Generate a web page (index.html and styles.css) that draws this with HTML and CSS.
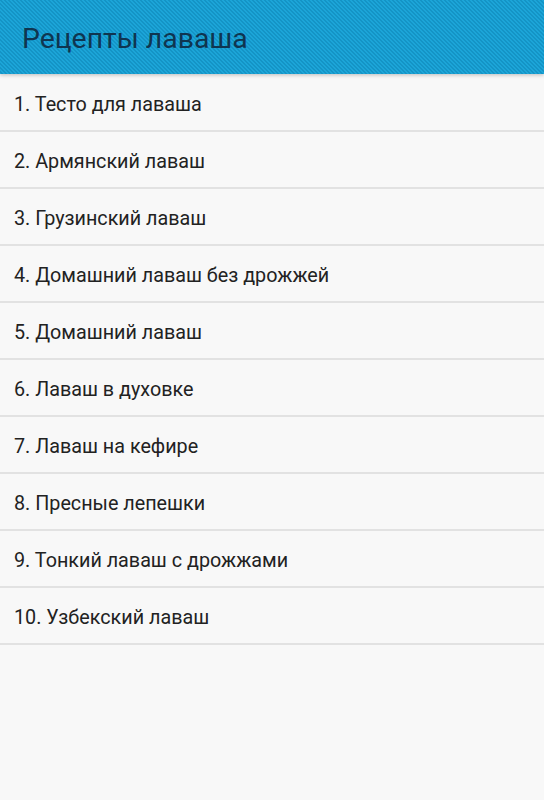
FILE: index.html
```html
<!DOCTYPE html>
<html lang="ru">
<head>
<meta charset="utf-8">
<title>Рецепты лаваша</title>
<link rel="stylesheet" href="styles.css">
</head>
<body>
<header class="appbar">
  <h1 class="title">Рецепты лаваша</h1>
</header>
<ul class="list">
  <li class="item">1. Тесто для лаваша</li>
  <li class="item">2. Армянский лаваш</li>
  <li class="item">3. Грузинский лаваш</li>
  <li class="item">4. Домашний лаваш без дрожжей</li>
  <li class="item">5. Домашний лаваш</li>
  <li class="item">6. Лаваш в духовке</li>
  <li class="item">7. Лаваш на кефире</li>
  <li class="item">8. Пресные лепешки</li>
  <li class="item">9. Тонкий лаваш с дрожжами</li>
  <li class="item">10. Узбекский лаваш</li>
</ul>
</body>
</html>
```
FILE: styles.css
```css
* { box-sizing: border-box; }
html, body {
  margin: 0;
  padding: 0;
  background: #f8f8f8;
  font-family: Roboto, "Noto Sans", sans-serif;
}
body { min-height: 800px; }
.appbar {
  position: relative;
  height: 74px;
  display: flex;
  align-items: center;
  padding-left: 22px;
  padding-top: 3px;
  background-color: #199fd2;
  background-image: repeating-linear-gradient(45deg, #1ca5d8 0px, #1ca5d8 1.4142px, #1494c6 1.4142px, #1494c6 2.8284px);
  box-shadow: 0 1px 4px rgba(0,0,0,0.25);
  z-index: 1;
}
.title {
  margin: 0;
  font-size: 28.4px;
  font-weight: 400;
  color: #0f3550;
}
.list {
  list-style: none;
  margin: 0;
  padding: 1px 0 0 0;
}
.item {
  height: 57px;
  display: flex;
  align-items: center;
  padding-left: 14px;
  padding-top: 3px;
  font-size: 19.75px;
  color: #222;
  border-bottom: 2px solid #e2e2e2;
}
```
